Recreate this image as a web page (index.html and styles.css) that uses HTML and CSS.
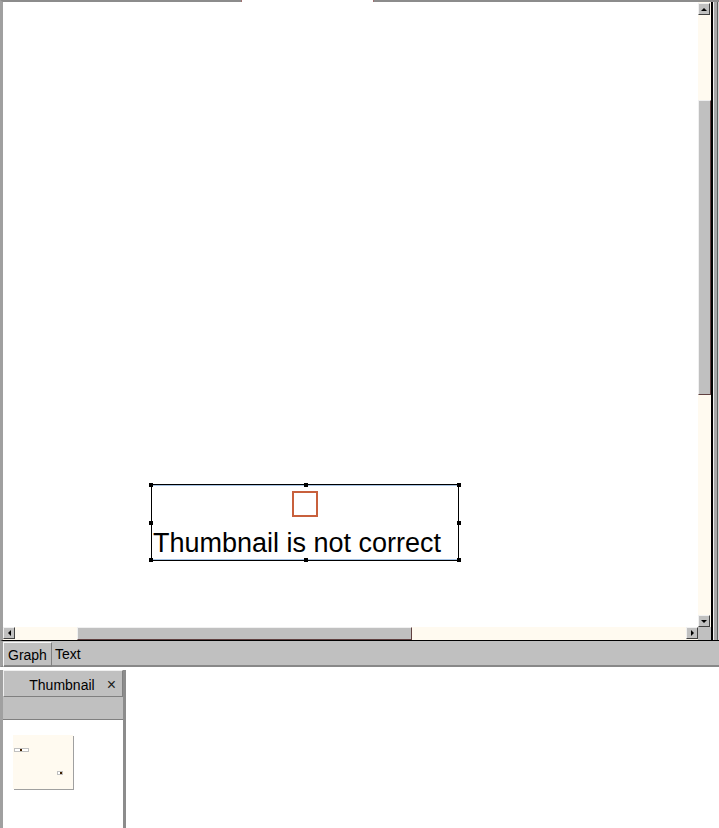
FILE: index.html
```html
<!DOCTYPE html>
<html lang="en">
<head>
    <meta charset="UTF-8">
    <title>Graph editor</title>
    <link rel="stylesheet" href="styles.css">
</head>
<body>
    <div class="app">
        <div class="editor">
            <div class="top-tab"></div>
            <div class="canvas-col">
                <div class="canvas">
                    <div class="node">
                        <div class="node-inner">
                            <div class="node-icon"></div>
                            <div class="node-label">Thumbnail is not correct</div>
                        </div>
                        <span class="handle h-tl"></span>
                        <span class="handle h-tc"></span>
                        <span class="handle h-tr"></span>
                        <span class="handle h-ml"></span>
                        <span class="handle h-mr"></span>
                        <span class="handle h-bl"></span>
                        <span class="handle h-bc"></span>
                        <span class="handle h-br"></span>
                    </div>
                </div>
                <div class="hscroll">
                    <div class="sbtn left"><span class="arrow-left"></span></div>
                    <div class="track-gap hgap1"></div>
                    <div class="hthumb"></div>
                    <div class="track-gap fill"></div>
                    <div class="sbtn right"><span class="arrow-right"></span></div>
                </div>
            </div>
            <div class="vscroll-col">
                <div class="vscroll">
                    <div class="sbtn up"><span class="arrow-up"></span></div>
                    <div class="track-gap vgap1"></div>
                    <div class="vthumb"></div>
                    <div class="track-gap fill"></div>
                    <div class="sbtn down"><span class="arrow-down"></span></div>
                </div>
                <div class="corner"></div>
            </div>
            <div class="right-edge"></div>
        </div>

        <div class="tabs">
            <div class="tab active">Graph</div>
            <div class="tab">Text</div>
        </div>

        <div class="bottom">
            <div class="thumb-panel">
                <div class="panel-head">
                    <span class="panel-title">Thumbnail</span>
                    <span class="panel-close">×</span>
                </div>
                <div class="panel-bar"></div>
                <div class="panel-body">
                    <div class="preview">
                        <span class="mini mini-node"></span>
                        <span class="mini mini-view"></span>
                    </div>
                </div>
            </div>
            <div class="bottom-rest"></div>
        </div>
    </div>
</body>
</html>
```

FILE: styles.css
```css
html, body {
    margin: 0;
    padding: 0;
    background-color: #ffffff;
    overflow: hidden;
}
.app {
    width: 719px;
    height: 828px;
    display: flex;
    flex-direction: column;
    font-family: "Liberation Sans", Arial, sans-serif;
}

/* graph editor */
.editor {
    height: 641px;
    display: flex;
    position: relative;
    border-left: 3px solid #a0a0a0;
    border-top: 2px solid #8c8c8c;
    box-sizing: border-box;
    border-bottom: 1px solid #000;
}
.top-tab {
    position: absolute;
    left: 238px;
    top: -2px;
    width: 131px;
    height: 2px;
    background-color: #ffffff;
    border-left: 1px solid #a07070;
    border-right: 1px solid #a07070;
}
.canvas-col {
    flex: 1;
    display: flex;
    flex-direction: column;
}
.canvas {
    flex: 1;
    position: relative;
    background-color: #ffffff;
}
.vscroll-col {
    width: 13px;
    display: flex;
    flex-direction: column;
}
.vscroll {
    flex: 1;
    display: flex;
    flex-direction: column;
    background-color: #fffaf0;
    padding-top: 1px;
}
.corner {
    height: 13px;
    background-color: #c0c0c0;
}
.right-edge {
    width: 8px;
    border-left: 2px solid #000;
    background: linear-gradient(to right, #f0f0f0 0, #f0f0f0 1px, #a8a8a8 1px, #a8a8a8 4px, #606060 4px, #606060 5px, #d8d8d8 5px);
    box-sizing: border-box;
}

/* scrollbars */
.hscroll {
    height: 13px;
    display: flex;
    background-color: #fffaf0;
}
.sbtn {
    width: 12px;
    height: 12px;
    background-color: #c0c0c0;
    border: 1px solid;
    border-color: #f0f0f0 #404040 #404040 #f0f0f0;
    box-sizing: border-box;
    display: flex;
    align-items: center;
    justify-content: center;
    flex-shrink: 0;
}
.track-gap.fill {
    flex: 1;
}
.hgap1 {
    width: 62px;
}
.vgap1 {
    height: 85px;
}
.hthumb {
    width: 335px;
    background-color: #c0c0c0;
    border: 1px solid;
    border-color: #f0f0f0 #604040 #604040 #f0f0f0;
    box-sizing: border-box;
}
.vthumb {
    height: 295px;
    background-color: #c0c0c0;
    border: 1px solid;
    border-color: #f0f0f0 #604040 #604040 #f0f0f0;
    box-sizing: border-box;
}
.arrow-up {
    border-left: 3px solid transparent;
    border-right: 3px solid transparent;
    border-bottom: 3px solid #000;
}
.arrow-down {
    border-left: 3px solid transparent;
    border-right: 3px solid transparent;
    border-top: 3px solid #000;
}
.arrow-left {
    border-top: 3px solid transparent;
    border-bottom: 3px solid transparent;
    border-right: 3px solid #000;
}
.arrow-right {
    border-top: 3px solid transparent;
    border-bottom: 3px solid transparent;
    border-left: 3px solid #000;
}

/* node on the canvas */
.node {
    position: absolute;
    left: 147px;
    top: 482px;
    width: 310px;
    height: 77px;
    border-top: 1px solid #000;
    border-bottom: 1px solid #000;
    box-sizing: border-box;
}
.node-inner {
    height: 100%;
    border-left: 1px solid #000;
    border-right: 1px solid #000;
    margin: 0 1px;
    box-sizing: border-box;
    display: flex;
    flex-direction: column;
    align-items: center;
    padding-top: 6px;
    box-shadow: inset 0 1px 0 #a8c4e4, inset 0 -1px 0 #a8c4e4;
}
.node-icon {
    width: 26px;
    height: 26px;
    border: 2px solid #c8603c;
    box-sizing: border-box;
}
.node-label {
    align-self: flex-start;
    margin-left: 1px;
    margin-top: 11px;
    font-size: 27px;
    line-height: 30px;
    color: #000;
    white-space: nowrap;
}
.handle {
    position: absolute;
    width: 4px;
    height: 4px;
    background-color: #000;
}
.h-tl { left: -1px; top: -2px; }
.h-tc { left: 154px; top: -2px; }
.h-tr { right: -1px; top: -2px; }
.h-ml { left: -1px; top: 36px; }
.h-mr { right: -1px; top: 36px; }
.h-bl { left: -1px; bottom: -2px; }
.h-bc { left: 154px; bottom: -2px; }
.h-br { right: -1px; bottom: -2px; }

/* tab strip */
.tabs {
    height: 26px;
    display: flex;
    align-items: flex-start;
    background-color: #c0c0c0;
    border-bottom: 2px solid #888888;
    border-left: 3px solid #a0a0a0;
    box-sizing: border-box;
    padding-top: 1px;
}
.tab {
    font-size: 14px;
    line-height: 22px;
    padding: 1px 3px 0;
    color: #000;
}
.tab.active {
    border: 1px solid;
    border-color: #f8f8f8 #808080 #808080 #f8f8f8;
    padding: 1px 4px 0;
}

/* bottom dock */
.bottom {
    flex: 1;
    display: flex;
    margin-top: 3px;
}
.thumb-panel {
    width: 126px;
    display: flex;
    flex-direction: column;
    border-left: 3px solid #a0a0a0;
    border-right: 3px solid #8c8c8c;
    box-sizing: border-box;
}
.panel-head {
    height: 27px;
    background-color: #c0c0c0;
    border: 1px solid;
    border-color: #f0f0f0 #808080 #808080 #f0f0f0;
    box-sizing: border-box;
    display: flex;
    align-items: center;
    justify-content: flex-end;
    padding: 2px 6px 0 0;
    gap: 12px;
    font-size: 14px;
}
.panel-close {
    font-size: 16px;
    color: #202020;
}
.panel-bar {
    height: 22px;
    background-color: #c0c0c0;
    border-bottom: 1px solid #808080;
}
.panel-body {
    flex: 1;
    background-color: #ffffff;
    padding: 15px 0 0 10px;
}
.preview {
    position: relative;
    width: 60px;
    height: 54px;
    background-color: #fffaf0;
    box-shadow: 1px 1px 0 #a0a0a0;
}
.mini {
    position: absolute;
    border: 1px solid #c0c0c0;
    box-sizing: border-box;
}
.mini-node {
    left: 1px;
    top: 13px;
    width: 15px;
    height: 4px;
    background: linear-gradient(to right, #fff 5px, #402000 5px, #402000 7px, #fff 7px);
}
.mini-view {
    left: 44px;
    top: 36px;
    width: 6px;
    height: 4px;
    background: linear-gradient(to right, #fff 2px, #402000 2px);
}
.bottom-rest {
    flex: 1;
    background-color: #ffffff;
}
```
